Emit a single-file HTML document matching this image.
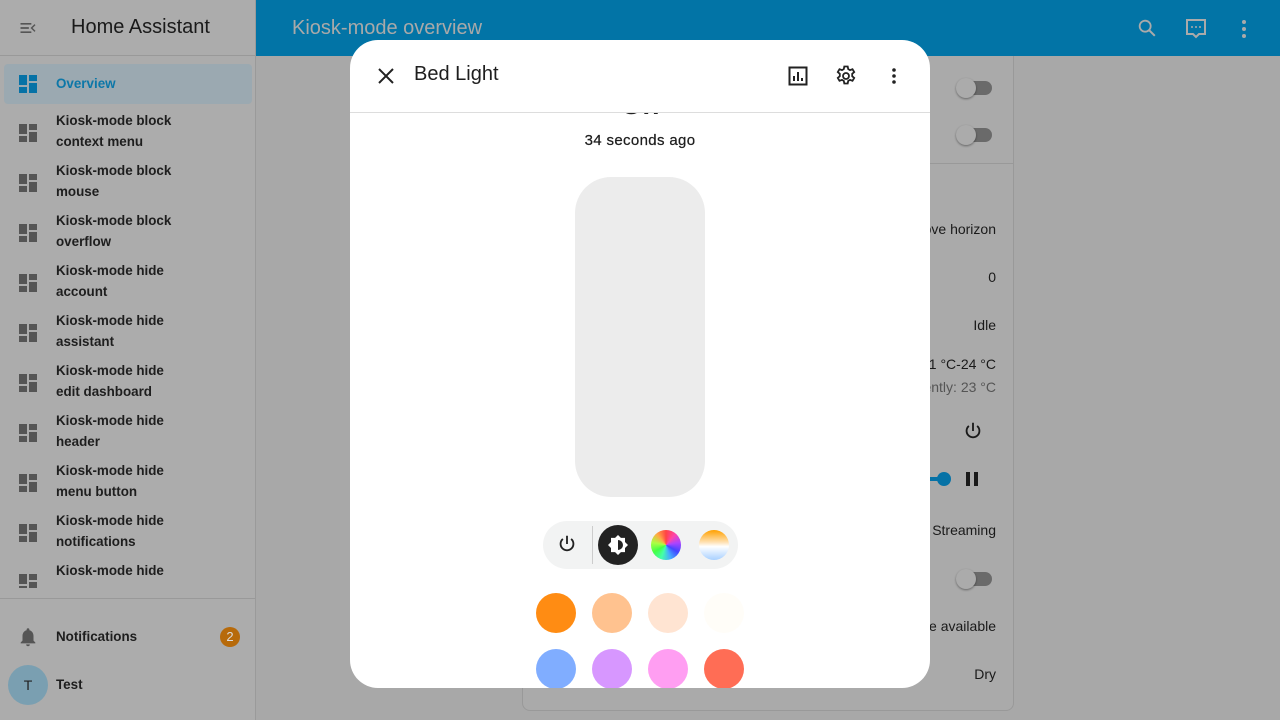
<!DOCTYPE html>
<html><head><meta charset="utf-8"><style>
*{box-sizing:border-box;margin:0;padding:0}
body{width:1280px;height:720px;overflow:hidden;background:#a8a8a8;font-family:"Liberation Sans",sans-serif;position:relative;color:#141414}
.sb{position:absolute;left:0;top:0;width:256px;height:720px;background:#acacac;border-right:1px solid #9a9a9a}
.sbh{height:56px;border-bottom:1px solid #999;position:relative}
.sbh .t{position:absolute;left:71px;top:16px;font-size:20px;color:#1a1a1a}
.item{position:absolute;left:4px;width:248px;font-size:13.4px;color:#1e1e1e;font-weight:bold}
.item .ic{position:absolute;left:15px;width:18px;height:18px}
.item .tx{position:absolute;left:52px;line-height:21px}
.hdr{position:absolute;left:256px;top:0;width:1024px;height:56px;background:#0274a6}
.hdr .t{position:absolute;left:36px;top:17px;font-size:20px;color:#a9a9a9}
.card{position:absolute;left:522px;top:40px;width:492px;height:671px;border:1px solid #999;border-radius:8px;background:#aaa}
.rt{position:absolute;right:284px;font-size:14px;color:#1a1a1a;text-align:right}
.tog{position:absolute;left:957px;width:35px;height:14px;border-radius:7px;background:#6a6a6a}
.tog:before{content:"";position:absolute;left:-1px;top:-3px;width:20px;height:20px;border-radius:50%;background:#ababab;box-shadow:0 1px 2px rgba(0,0,0,.4)}
.dlg{position:absolute;left:350px;top:40px;width:580px;height:648px;background:#fff;border-radius:28px;overflow:hidden}
.dot{position:absolute;width:40px;height:40px;border-radius:50%}
</style></head><body>
<div class="sb">
 <div class="sbh">
  <svg style="position:absolute;left:18px;top:18px" width="20" height="20" viewBox="0 0 24 24"><path fill="#555" d="M3 6h13v2H3zM3 11h10v2H3zM3 16h13v2H3zM21 8.5l-3.5 3.5 3.5 3.5-1.2 1.2L15 12l4.8-4.7z"/></svg>
  <div class="t">Home Assistant</div>
 </div>
 <div class="item" style="top:64px;height:40px;background:#9ba9b1;border-radius:4px;color:#0c77a8">
  <svg class="ic" style="top:11px" viewBox="0 0 18 18"><path fill="#0672a6" d="M0 0h8v10H0zM10 0h8v6h-8zM0 12h8v6H0zM10 8h8v10h-8z"/></svg>
  <div class="tx" style="top:9px">Overview</div></div>
 <div class="item" style="top:110px"><svg class="ic" style="top:14px" viewBox="0 0 18 18"><path fill="#555" d="M0 0h8v10H0zM10 0h8v6h-8zM0 12h8v6H0zM10 8h8v10h-8z"/></svg><div class="tx">Kiosk-mode block<br>context menu</div></div>
 <div class="item" style="top:160px"><svg class="ic" style="top:14px" viewBox="0 0 18 18"><path fill="#555" d="M0 0h8v10H0zM10 0h8v6h-8zM0 12h8v6H0zM10 8h8v10h-8z"/></svg><div class="tx">Kiosk-mode block<br>mouse</div></div>
 <div class="item" style="top:210px"><svg class="ic" style="top:14px" viewBox="0 0 18 18"><path fill="#555" d="M0 0h8v10H0zM10 0h8v6h-8zM0 12h8v6H0zM10 8h8v10h-8z"/></svg><div class="tx">Kiosk-mode block<br>overflow</div></div>
 <div class="item" style="top:260px"><svg class="ic" style="top:14px" viewBox="0 0 18 18"><path fill="#555" d="M0 0h8v10H0zM10 0h8v6h-8zM0 12h8v6H0zM10 8h8v10h-8z"/></svg><div class="tx">Kiosk-mode hide<br>account</div></div>
 <div class="item" style="top:310px"><svg class="ic" style="top:14px" viewBox="0 0 18 18"><path fill="#555" d="M0 0h8v10H0zM10 0h8v6h-8zM0 12h8v6H0zM10 8h8v10h-8z"/></svg><div class="tx">Kiosk-mode hide<br>assistant</div></div>
 <div class="item" style="top:360px"><svg class="ic" style="top:14px" viewBox="0 0 18 18"><path fill="#555" d="M0 0h8v10H0zM10 0h8v6h-8zM0 12h8v6H0zM10 8h8v10h-8z"/></svg><div class="tx">Kiosk-mode hide<br>edit dashboard</div></div>
 <div class="item" style="top:410px"><svg class="ic" style="top:14px" viewBox="0 0 18 18"><path fill="#555" d="M0 0h8v10H0zM10 0h8v6h-8zM0 12h8v6H0zM10 8h8v10h-8z"/></svg><div class="tx">Kiosk-mode hide<br>header</div></div>
 <div class="item" style="top:460px"><svg class="ic" style="top:14px" viewBox="0 0 18 18"><path fill="#555" d="M0 0h8v10H0zM10 0h8v6h-8zM0 12h8v6H0zM10 8h8v10h-8z"/></svg><div class="tx">Kiosk-mode hide<br>menu button</div></div>
 <div class="item" style="top:510px"><svg class="ic" style="top:14px" viewBox="0 0 18 18"><path fill="#555" d="M0 0h8v10H0zM10 0h8v6h-8zM0 12h8v6H0zM10 8h8v10h-8z"/></svg><div class="tx">Kiosk-mode hide<br>notifications</div></div>
 <div class="item" style="top:560px;height:28px;overflow:hidden"><svg class="ic" style="top:14px" viewBox="0 0 18 18"><path fill="#555" d="M0 0h8v10H0zM10 0h8v6h-8zM0 12h8v6H0zM10 8h8v10h-8z"/></svg><div class="tx">Kiosk-mode hide<br>sync</div></div>
 <div style="position:absolute;left:0;top:598px;width:255px;border-top:1px solid #999"></div>
 <svg style="position:absolute;left:17px;top:625px" width="22" height="24" viewBox="0 0 24 24"><path fill="#555" d="M12 22a2 2 0 002-2h-4a2 2 0 002 2zm6-6V11c0-3.1-1.6-5.6-4.5-6.3V4a1.5 1.5 0 00-3 0v.7C7.6 5.4 6 7.9 6 11v5l-2 2v1h16v-1z"/></svg>
 <div class="item" style="top:626px"><div class="tx">Notifications</div></div>
 <div style="position:absolute;left:220px;top:627px;width:20px;height:20px;border-radius:50%;background:#b76a0a;color:#ddd;font-size:13px;text-align:center;line-height:20px">2</div>
 <div style="position:absolute;left:8px;top:665px;width:40px;height:40px;border-radius:50%;background:#7a9fb1;color:#222;font-size:14px;text-align:center;line-height:40px">T</div>
 <div class="item" style="top:674px"><div class="tx">Test</div></div>
</div>
<div class="card">
 <div style="position:absolute;left:0;right:0;top:122px;border-top:1px solid #999"></div>
</div>
<div class="rt" style="top:221px">ove horizon</div>
<div class="rt" style="top:269px">0</div>
<div class="rt" style="top:317px">Idle</div>
<div class="rt" style="top:356px">21 °C-24 °C</div>
<div class="rt" style="top:379px;color:#555">ently: 23 °C</div>
<div class="rt" style="top:522px">Streaming</div>
<div class="rt" style="top:618px">te available</div>
<div class="rt" style="top:666px">Dry</div>
<div class="tog" style="top:81px"></div>
<div class="tog" style="top:128px"></div>
<div class="tog" style="top:572px"></div>
<svg style="position:absolute;left:962px;top:420px" width="22" height="22" viewBox="0 0 24 24"><path fill="none" stroke="#1a1a1a" stroke-width="2" d="M12 3v9M7.5 6.5a7 7 0 109 0"/></svg>
<div style="position:absolute;left:920px;top:477px;width:20px;height:4px;background:#0672a6"></div>
<div style="position:absolute;left:937px;top:472px;width:14px;height:14px;border-radius:50%;background:#0672a6"></div>
<div style="position:absolute;left:966px;top:472px;width:4px;height:14px;background:#1a1a1a"></div>
<div style="position:absolute;left:974px;top:472px;width:4px;height:14px;background:#1a1a1a"></div>
<div class="hdr"><div class="t">Kiosk-mode overview</div>
 <svg style="position:absolute;left:880px;top:17px" width="22" height="22" viewBox="0 0 24 24"><circle cx="10" cy="10" r="6" fill="none" stroke="#aaa" stroke-width="2"/><path d="M14.5 14.5l6 6" stroke="#aaa" stroke-width="2.2"/></svg>
 <svg style="position:absolute;left:928px;top:17px" width="24" height="24" viewBox="0 0 24 24"><path fill="none" stroke="#aaa" stroke-width="2" d="M3 3h18v14h-6l-3 3-3-3H3z"/><circle cx="8" cy="10" r="1" fill="#aaa"/><circle cx="12" cy="10" r="1" fill="#aaa"/><circle cx="16" cy="10" r="1" fill="#aaa"/></svg>
 <svg style="position:absolute;left:976px;top:17px" width="24" height="24" viewBox="0 0 24 24"><circle cx="12" cy="5" r="2" fill="#aaa"/><circle cx="12" cy="12" r="2" fill="#aaa"/><circle cx="12" cy="19" r="2" fill="#aaa"/></svg>
</div>
<div class="dlg">
 <svg style="position:absolute;left:24px;top:24px" width="24" height="24" viewBox="0 0 24 24"><path stroke="#222" stroke-width="2" d="M5 5l14 14M19 5L5 19"/></svg>
 <div style="position:absolute;left:64px;top:23px;font-size:20px;color:#1e1e1e">Bed Light</div>
 <svg style="position:absolute;left:436px;top:24px" width="24" height="24" viewBox="0 0 24 24"><rect x="3.5" y="3.5" width="17" height="17" fill="none" stroke="#222" stroke-width="2"/><path stroke="#222" stroke-width="2" d="M8 17v-5M12 17V8M16 17v-3"/></svg>
 <svg style="position:absolute;left:484px;top:24px" width="24" height="24" viewBox="0 0 24 24"><path fill="none" stroke="#222" stroke-width="1.8" d="M10.3 2.5h3.4l.5 2.6 1.8 1 2.5-.9 1.7 2.9-2 1.7v2.4l2 1.7-1.7 2.9-2.5-.9-1.8 1-.5 2.6h-3.4l-.5-2.6-1.8-1-2.5.9-1.7-2.9 2-1.7V9.8l-2-1.7 1.7-2.9 2.5.9 1.8-1z"/><circle cx="12" cy="12" r="3" fill="none" stroke="#222" stroke-width="1.8"/></svg>
 <svg style="position:absolute;left:532px;top:24px" width="24" height="24" viewBox="0 0 24 24"><circle cx="12" cy="6" r="1.8" fill="#222"/><circle cx="12" cy="12" r="1.8" fill="#222"/><circle cx="12" cy="18" r="1.8" fill="#222"/></svg>
 <div style="position:absolute;left:0;right:0;top:72px;border-top:1px solid #ddd"></div>
 <div style="position:absolute;left:266px;top:73px;width:48px;height:4px;overflow:hidden"><div style="margin-top:-24px;font-size:28px;font-weight:bold;color:#222;text-align:center">On</div></div>
 <div style="position:absolute;left:0;width:580px;top:92px;text-align:center;font-size:15px;letter-spacing:0.35px;color:#1e1e1e;-webkit-text-stroke:0.25px #1e1e1e">34 seconds ago</div>
 <div style="position:absolute;left:225px;top:137px;width:130px;height:320px;border-radius:36px;background:#ececec"></div>
 <div style="position:absolute;left:193px;top:481px;width:195px;height:48px;border-radius:24px;background:#f2f3f3"></div>
 <div style="position:absolute;left:242px;top:486px;width:1px;height:38px;background:#ccc"></div>
 <svg style="position:absolute;left:206px;top:493px" width="22" height="22" viewBox="0 0 24 24"><path fill="none" stroke="#222" stroke-width="2" d="M12 3v9M7.5 6.5a7 7 0 109 0"/></svg>
 <div style="position:absolute;left:248px;top:485px;width:40px;height:40px;border-radius:50%;background:#222"></div>
 <svg style="position:absolute;left:256px;top:493px" width="24" height="24" viewBox="0 0 24 24"><path fill="#fff" d="M12 2l2.9 2.9H19v4.1L22 12l-3 3v4.1h-4.1L12 22l-2.9-2.9H5v-4.1L2 12l3-3V4.9h4.1z"/><path fill="#222" d="M12 7a5 5 0 010 10z"/></svg>
 <div style="position:absolute;left:301px;top:490px;width:30px;height:30px;border-radius:50%;background:conic-gradient(#f44,#f4a,#a4f,#44f,#4af,#4fa,#4f4,#af4,#fa4,#f44)"></div>
 <div style="position:absolute;left:349px;top:490px;width:30px;height:30px;border-radius:50%;background:linear-gradient(#ffa000,#ffe0b0 40%,#fff 55%,#a8d0ff)"></div>
 <div class="dot" style="left:186px;top:553px;background:#ff8c13"></div>
 <div class="dot" style="left:242px;top:553px;background:#ffc28f"></div>
 <div class="dot" style="left:298px;top:553px;background:#ffe4d2"></div>
 <div class="dot" style="left:354px;top:553px;background:#fffdf8"></div>
 <div class="dot" style="left:186px;top:609px;background:#80adff"></div>
 <div class="dot" style="left:242px;top:609px;background:#d797ff"></div>
 <div class="dot" style="left:298px;top:609px;background:#ff9ef2"></div>
 <div class="dot" style="left:354px;top:609px;background:#ff6d55"></div>
</div>
</body></html>
